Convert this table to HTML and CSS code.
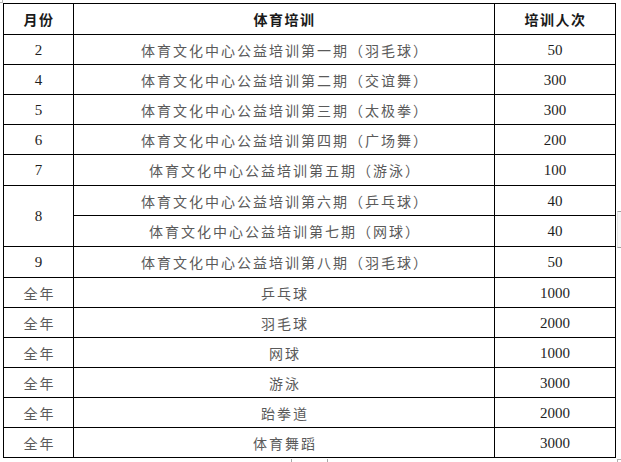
FILE: index.html
```html
<!DOCTYPE html>
<html lang="zh-CN">
<head>
<meta charset="utf-8">
<link rel="stylesheet" href="styles.css">
</head>
<body>
<div class="page">
  <table class="grid">
    <colgroup>
      <col class="c1"><col class="c2"><col class="c3">
    </colgroup>
    <thead>
      <tr class="r31">
        <th class="zh">月份</th>
        <th class="zh">体育培训</th>
        <th class="zh">培训人次</th>
      </tr>
    </thead>
    <tbody>
      <tr><td class="num">2</td><td class="zh">体育文化中心公益培训第一期（羽毛球）</td><td class="num">50</td></tr>
      <tr><td class="num">4</td><td class="zh">体育文化中心公益培训第二期（交谊舞）</td><td class="num">300</td></tr>
      <tr><td class="num">5</td><td class="zh">体育文化中心公益培训第三期（太极拳）</td><td class="num">300</td></tr>
      <tr><td class="num">6</td><td class="zh">体育文化中心公益培训第四期（广场舞）</td><td class="num">200</td></tr>
      <tr class="r31"><td class="num">7</td><td class="zh">体育文化中心公益培训第五期（游泳）</td><td class="num">100</td></tr>
      <tr><td class="num" rowspan="2">8</td><td class="zh">体育文化中心公益培训第六期（乒乓球）</td><td class="num">40</td></tr>
      <tr class="r31"><td class="zh">体育文化中心公益培训第七期（网球）</td><td class="num">40</td></tr>
      <tr class="r31"><td class="num">9</td><td class="zh">体育文化中心公益培训第八期（羽毛球）</td><td class="num">50</td></tr>
      <tr><td class="zh">全年</td><td class="zh">乒乓球</td><td class="num">1000</td></tr>
      <tr><td class="zh">全年</td><td class="zh">羽毛球</td><td class="num">2000</td></tr>
      <tr><td class="zh">全年</td><td class="zh">网球</td><td class="num">1000</td></tr>
      <tr><td class="zh">全年</td><td class="zh">游泳</td><td class="num">3000</td></tr>
      <tr><td class="zh">全年</td><td class="zh">跆拳道</td><td class="num">2000</td></tr>
      <tr><td class="zh">全年</td><td class="zh">体育舞蹈</td><td class="num">3000</td></tr>
    </tbody>
  </table>
  <div class="mark-corner"></div>
  <div class="mark-bracket"></div>
  <div class="mark-tick t1"></div>
  <div class="mark-tick t2"></div>
  <div class="mark-br"></div>
</div>
</body>
</html>
```

FILE: styles.css
```css
html, body {
  margin: 0;
  padding: 0;
  background: #ffffff;
}

.page {
  position: relative;
  width: 621px;
  height: 462px;
  padding: 3px 0 0 3px;
  box-sizing: border-box;
  overflow: hidden;
}

.grid {
  border-collapse: collapse;
  table-layout: fixed;
  width: 613px;
}

.c1 { width: 70px; }
.c2 { width: 421px; }
.c3 { width: 121px; }

.grid th,
.grid td {
  border: 1px solid #000;
  padding: 0;
  height: 29px;
  text-align: center;
  vertical-align: middle;
  line-height: 16px;
}

.grid tr.r31 th,
.grid tr.r31 td {
  height: 30px;
}

.zh {
  font-family: "Noto Sans CJK SC", "Noto Sans", sans-serif;
  font-size: 14px;
  letter-spacing: 2px;
  color: #5a5a5a;
  font-weight: 400;
}

.grid td.zh {
  padding-left: 2px;
}

.grid th.zh {
  font-weight: 700;
  color: #1a1a1a;
  letter-spacing: 1.5px;
  padding-left: 1px;
}

.num {
  font-family: "Liberation Serif", "Times New Roman", serif;
  font-size: 15px;
  color: #1e1e1e;
}

.mark-corner {
  position: absolute;
  left: 0;
  top: 0;
  width: 2px;
  height: 2px;
  border-right: 1px solid #b8b8b8;
  border-bottom: 1px solid #b8b8b8;
}

.mark-bracket {
  position: absolute;
  left: 617px;
  top: 211px;
  width: 6px;
  height: 35px;
  background: #f6f6f6;
  border-top: 1px solid #a0a0a0;
  border-bottom: 1px solid #a0a0a0;
  border-left: 1px solid #e6e6e6;
}

.mark-tick {
  position: absolute;
  top: 459px;
  width: 1px;
  height: 4px;
  background: #a8a8a8;
}
.t1 { left: 291px; }
.t2 { left: 327px; }

.mark-br {
  position: absolute;
  left: 617px;
  top: 459px;
  width: 4px;
  height: 3px;
  border-left: 1px solid #b0b0b0;
  border-top: 1px solid #b0b0b0;
}
```
